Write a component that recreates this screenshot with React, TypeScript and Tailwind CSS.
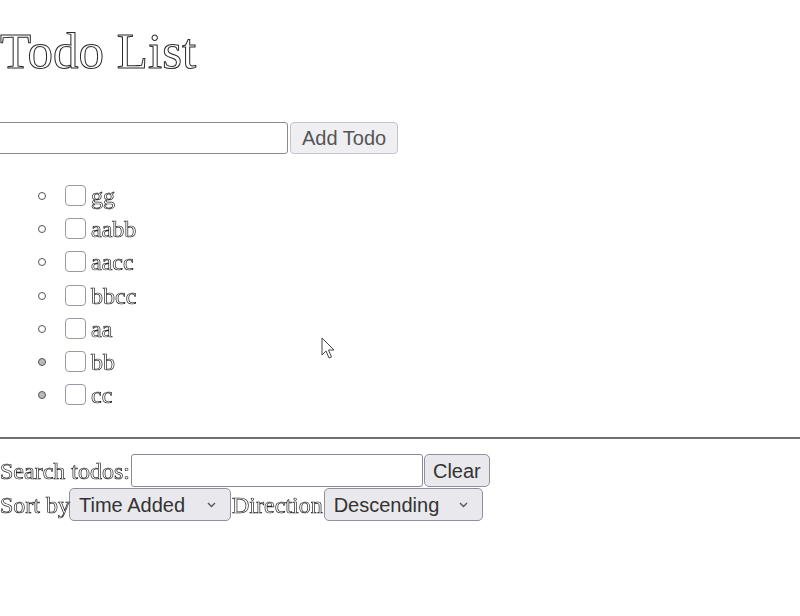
import React from "react";

const outline =
  "text-white [-webkit-text-stroke:1px_#2a2a2a] grayscale";
const outlineSm =
  "text-white [-webkit-text-stroke:0.7px_#262626] grayscale";
const serif = "font-['Liberation_Serif',_'Times_New_Roman',_serif]";
const sans = "font-['Liberation_Sans',_Arial,_sans-serif]";

const todos = ["gg", "aabb", "aacc", "bbcc", "aa", "bb", "cc"];

function Chevron() {
  return (
    <svg width="9" height="6" viewBox="0 0 9 6" className="shrink-0">
      <path d="M1 1 L4.5 4.5 L8 1" fill="none" stroke="#555" strokeWidth="1.4" />
    </svg>
  );
}

function FakeSelect({ label, width }: { label: string; width: string }) {
  return (
    <div
      className={`${width} h-[33px] flex items-center justify-between pl-[9px] pr-[14px] rounded-[5px] border border-[#8f8f9d] bg-[#e9e9ed] text-[20px] text-[#333] ${sans}`}
    >
      <span>{label}</span>
      <Chevron />
    </div>
  );
}

export default function App() {
  return (
    <div className={`relative w-[800px] h-[616px] overflow-hidden bg-white ${serif}`}>
      <h1 className={`mt-[24px] h-[55px] leading-[55px] text-[51px] font-normal ${outline}`}>Todo List</h1>

      <div className="mt-[43px] flex items-start gap-[2px]">
        <div className="-ml-[4px] w-[292px] h-[32px] rounded-[3px] border border-[#8a8a96] bg-white" />
        <div
          className={`h-[32px] px-[11px] flex items-center rounded-[4px] border border-[#c4c4cc] bg-[#efeff2] text-[20px] text-[#555] ${sans}`}
        >
          Add Todo
        </div>
      </div>

      <ul className="mt-[25px]">
        {todos.map((t, i) => (
          <li key={t} className="h-[33.2px] flex items-start">
            <span
              className={`ml-[38px] mt-[13px] w-[8px] h-[8px] rounded-full border border-[#555] ${
                i >= 5 ? "bg-[#bbb]" : "bg-white"
              }`}
            />
            <span className="ml-[19px] mt-[6px] w-[21px] h-[21px] rounded-[4px] border-[1.5px] border-[#9a9aa4] bg-white" />
            <span className={`ml-[5px] mt-[3px] text-[24px] leading-[28px] ${outlineSm}`}>{t}</span>
          </li>
        ))}
      </ul>

      <div className="mt-[26px] border-t-2 border-[#6e6e6e]" />

      <div className="mt-[15px] h-[33px] flex items-center">
        <span className={`text-[24px] leading-[28px] ${outlineSm}`}>Search todos:</span>
        <div className="ml-[1px] w-[292px] h-[33px] rounded-[3px] border border-[#8a8a96] bg-white" />
        <div
          className={`ml-[1px] h-[33px] px-[8px] flex items-center rounded-[5px] border border-[#8f8f9d] bg-[#e9e9ed] text-[20px] text-[#333] ${sans}`}
        >
          Clear
        </div>
      </div>

      <div className="mt-[1px] h-[33px] flex items-center">
        <span className={`text-[24px] leading-[28px] ${outlineSm}`}>Sort by</span>
        <div className="-ml-[1px]">
          <FakeSelect label="Time Added" width="w-[162px]" />
        </div>
        <span className={`ml-[1px] text-[24px] leading-[28px] ${outlineSm}`}>Direction</span>
        <div className="ml-[1px]">
          <FakeSelect label="Descending" width="w-[159px]" />
        </div>
      </div>

      <svg
        className="absolute left-[321px] top-[337px]"
        width="16"
        height="24"
        viewBox="0 0 16 24"
      >
        <path
          d="M1 1 L1 18 L5 14 L8 21 L10.5 20 L7.5 13 L13 13 Z"
          fill="white"
          stroke="#444"
          strokeWidth="1"
          strokeLinejoin="round"
        />
      </svg>
    </div>
  );
}
